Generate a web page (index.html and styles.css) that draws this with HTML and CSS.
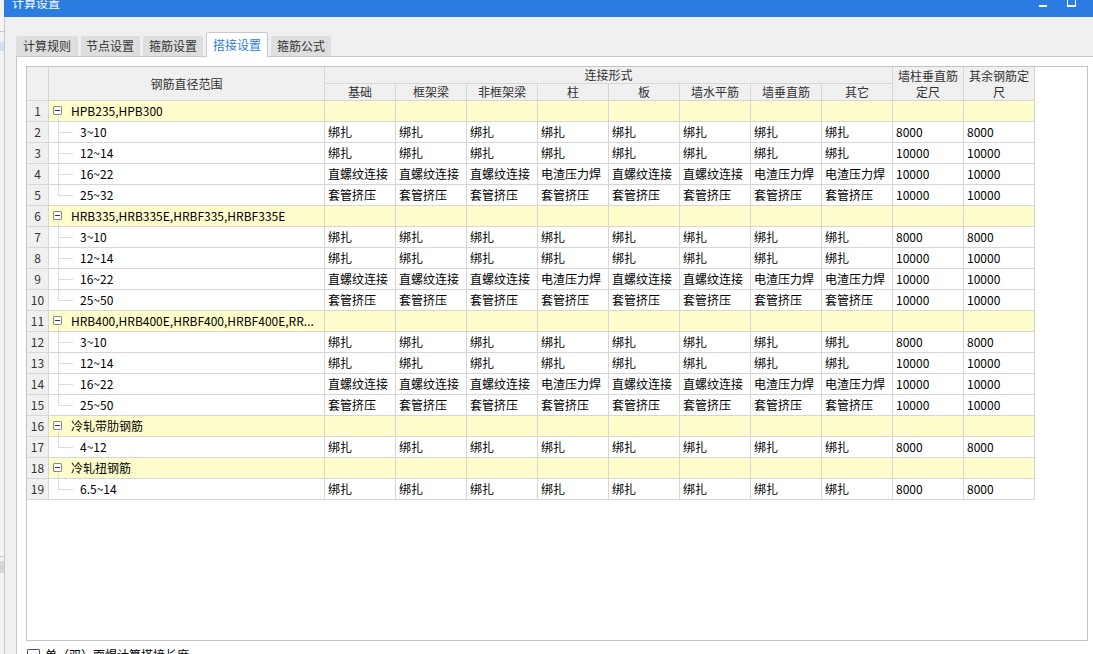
FILE: index.html
```html
<!DOCTYPE html>
<html lang="zh-CN">
<head>
<meta charset="utf-8">
<title>计算设置</title>
<link rel="stylesheet" href="styles.css">
</head>
<body>
<div class="screen">
  <div class="bgstrip"></div>
  <div class="dialog">
    <div class="titlebar">
      <span class="title">计算设置</span>
      <div class="winbtns">
        <svg class="btn-min" width="8" height="3" viewBox="0 0 8 3"><rect x="0" y="0" width="8" height="2" fill="#fff"/></svg>
        <svg class="btn-max" width="9" height="7" viewBox="0 0 9 7"><rect x="0.5" y="-2" width="8" height="8.5" fill="none" stroke="#fff" stroke-width="1"/><rect x="0" y="5" width="9" height="2" fill="#fff"/></svg>
      </div>
    </div>
    <div class="body">
      <div class="tabs">
        <div class="tab">计算规则</div>
        <div class="tab">节点设置</div>
        <div class="tab">箍筋设置</div>
        <div class="tab active">搭接设置</div>
        <div class="tab">箍筋公式</div>
      </div>
      <div class="panel">
        <div class="gridbox">
          <div class="grid">
            <div class="h rn hspan"></div>
            <div class="h range hspan">钢筋直径范围</div>
            <div class="h conn">连接形式</div>
            <div class="h last1 hspan">墙柱垂直筋定尺</div>
            <div class="h last2 hspan">其余钢筋定尺</div>
            <div class="h">基础</div>
            <div class="h">框架梁</div>
            <div class="h">非框架梁</div>
            <div class="h">柱</div>
            <div class="h">板</div>
            <div class="h">墙水平筋</div>
            <div class="h">墙垂直筋</div>
            <div class="h">其它</div>

            <!-- 1 -->
            <div class="c rn">1</div>
            <div class="c g name"><span class="minus"></span><span class="gt">HPB235,HPB300</span></div>
            <div class="c g"></div><div class="c g"></div><div class="c g"></div><div class="c g"></div><div class="c g"></div><div class="c g"></div><div class="c g"></div><div class="c g"></div><div class="c g"></div><div class="c g"></div>
            <!-- 2 -->
            <div class="c rn">2</div>
            <div class="c name"><span class="branch"></span><span>3~10</span></div>
            <div class="c">绑扎</div><div class="c">绑扎</div><div class="c">绑扎</div><div class="c">绑扎</div><div class="c">绑扎</div><div class="c">绑扎</div><div class="c">绑扎</div><div class="c">绑扎</div><div class="c">8000</div><div class="c">8000</div>
            <!-- 3 -->
            <div class="c rn">3</div>
            <div class="c name"><span class="branch"></span><span>12~14</span></div>
            <div class="c">绑扎</div><div class="c">绑扎</div><div class="c">绑扎</div><div class="c">绑扎</div><div class="c">绑扎</div><div class="c">绑扎</div><div class="c">绑扎</div><div class="c">绑扎</div><div class="c">10000</div><div class="c">10000</div>
            <!-- 4 -->
            <div class="c rn">4</div>
            <div class="c name"><span class="branch"></span><span>16~22</span></div>
            <div class="c">直螺纹连接</div><div class="c">直螺纹连接</div><div class="c">直螺纹连接</div><div class="c">电渣压力焊</div><div class="c">直螺纹连接</div><div class="c">直螺纹连接</div><div class="c">电渣压力焊</div><div class="c">电渣压力焊</div><div class="c">10000</div><div class="c">10000</div>
            <!-- 5 -->
            <div class="c rn">5</div>
            <div class="c name"><span class="branch end"></span><span>25~32</span></div>
            <div class="c">套管挤压</div><div class="c">套管挤压</div><div class="c">套管挤压</div><div class="c">套管挤压</div><div class="c">套管挤压</div><div class="c">套管挤压</div><div class="c">套管挤压</div><div class="c">套管挤压</div><div class="c">10000</div><div class="c">10000</div>

            <!-- 6 -->
            <div class="c rn">6</div>
            <div class="c g name"><span class="minus"></span><span class="gt">HRB335,HRB335E,HRBF335,HRBF335E</span></div>
            <div class="c g"></div><div class="c g"></div><div class="c g"></div><div class="c g"></div><div class="c g"></div><div class="c g"></div><div class="c g"></div><div class="c g"></div><div class="c g"></div><div class="c g"></div>
            <!-- 7 -->
            <div class="c rn">7</div>
            <div class="c name"><span class="branch"></span><span>3~10</span></div>
            <div class="c">绑扎</div><div class="c">绑扎</div><div class="c">绑扎</div><div class="c">绑扎</div><div class="c">绑扎</div><div class="c">绑扎</div><div class="c">绑扎</div><div class="c">绑扎</div><div class="c">8000</div><div class="c">8000</div>
            <!-- 8 -->
            <div class="c rn">8</div>
            <div class="c name"><span class="branch"></span><span>12~14</span></div>
            <div class="c">绑扎</div><div class="c">绑扎</div><div class="c">绑扎</div><div class="c">绑扎</div><div class="c">绑扎</div><div class="c">绑扎</div><div class="c">绑扎</div><div class="c">绑扎</div><div class="c">10000</div><div class="c">10000</div>
            <!-- 9 -->
            <div class="c rn">9</div>
            <div class="c name"><span class="branch"></span><span>16~22</span></div>
            <div class="c">直螺纹连接</div><div class="c">直螺纹连接</div><div class="c">直螺纹连接</div><div class="c">电渣压力焊</div><div class="c">直螺纹连接</div><div class="c">直螺纹连接</div><div class="c">电渣压力焊</div><div class="c">电渣压力焊</div><div class="c">10000</div><div class="c">10000</div>
            <!-- 10 -->
            <div class="c rn">10</div>
            <div class="c name"><span class="branch end"></span><span>25~50</span></div>
            <div class="c">套管挤压</div><div class="c">套管挤压</div><div class="c">套管挤压</div><div class="c">套管挤压</div><div class="c">套管挤压</div><div class="c">套管挤压</div><div class="c">套管挤压</div><div class="c">套管挤压</div><div class="c">10000</div><div class="c">10000</div>

            <!-- 11 -->
            <div class="c rn">11</div>
            <div class="c g name"><span class="minus"></span><span class="gt">HRB400,HRB400E,HRBF400,HRBF400E,RR...</span></div>
            <div class="c g"></div><div class="c g"></div><div class="c g"></div><div class="c g"></div><div class="c g"></div><div class="c g"></div><div class="c g"></div><div class="c g"></div><div class="c g"></div><div class="c g"></div>
            <!-- 12 -->
            <div class="c rn">12</div>
            <div class="c name"><span class="branch"></span><span>3~10</span></div>
            <div class="c">绑扎</div><div class="c">绑扎</div><div class="c">绑扎</div><div class="c">绑扎</div><div class="c">绑扎</div><div class="c">绑扎</div><div class="c">绑扎</div><div class="c">绑扎</div><div class="c">8000</div><div class="c">8000</div>
            <!-- 13 -->
            <div class="c rn">13</div>
            <div class="c name"><span class="branch"></span><span>12~14</span></div>
            <div class="c">绑扎</div><div class="c">绑扎</div><div class="c">绑扎</div><div class="c">绑扎</div><div class="c">绑扎</div><div class="c">绑扎</div><div class="c">绑扎</div><div class="c">绑扎</div><div class="c">10000</div><div class="c">10000</div>
            <!-- 14 -->
            <div class="c rn">14</div>
            <div class="c name"><span class="branch"></span><span>16~22</span></div>
            <div class="c">直螺纹连接</div><div class="c">直螺纹连接</div><div class="c">直螺纹连接</div><div class="c">电渣压力焊</div><div class="c">直螺纹连接</div><div class="c">直螺纹连接</div><div class="c">电渣压力焊</div><div class="c">电渣压力焊</div><div class="c">10000</div><div class="c">10000</div>
            <!-- 15 -->
            <div class="c rn">15</div>
            <div class="c name"><span class="branch end"></span><span>25~50</span></div>
            <div class="c">套管挤压</div><div class="c">套管挤压</div><div class="c">套管挤压</div><div class="c">套管挤压</div><div class="c">套管挤压</div><div class="c">套管挤压</div><div class="c">套管挤压</div><div class="c">套管挤压</div><div class="c">10000</div><div class="c">10000</div>

            <!-- 16 -->
            <div class="c rn">16</div>
            <div class="c g name"><span class="minus"></span><span class="gt">冷轧带肋钢筋</span></div>
            <div class="c g"></div><div class="c g"></div><div class="c g"></div><div class="c g"></div><div class="c g"></div><div class="c g"></div><div class="c g"></div><div class="c g"></div><div class="c g"></div><div class="c g"></div>
            <!-- 17 -->
            <div class="c rn">17</div>
            <div class="c name"><span class="branch end"></span><span>4~12</span></div>
            <div class="c">绑扎</div><div class="c">绑扎</div><div class="c">绑扎</div><div class="c">绑扎</div><div class="c">绑扎</div><div class="c">绑扎</div><div class="c">绑扎</div><div class="c">绑扎</div><div class="c">8000</div><div class="c">8000</div>

            <!-- 18 -->
            <div class="c rn">18</div>
            <div class="c g name"><span class="minus"></span><span class="gt">冷轧扭钢筋</span></div>
            <div class="c g"></div><div class="c g"></div><div class="c g"></div><div class="c g"></div><div class="c g"></div><div class="c g"></div><div class="c g"></div><div class="c g"></div><div class="c g"></div><div class="c g"></div>
            <!-- 19 -->
            <div class="c rn">19</div>
            <div class="c name"><span class="branch end"></span><span>6.5~14</span></div>
            <div class="c">绑扎</div><div class="c">绑扎</div><div class="c">绑扎</div><div class="c">绑扎</div><div class="c">绑扎</div><div class="c">绑扎</div><div class="c">绑扎</div><div class="c">绑扎</div><div class="c">8000</div><div class="c">8000</div>
          </div>
        </div>
        <label class="check"><span class="box"></span><span>单（双）面焊计算搭接长度</span></label>
      </div>
    </div>
  </div>
</div>
</body>
</html>
```

FILE: styles.css
```css
* { box-sizing: border-box; }
html, body {
  margin: 0;
  padding: 0;
  width: 1093px;
  height: 654px;
  overflow: hidden;
  background: #f0f0f0;
  font-family: "Noto Sans CJK SC", "Microsoft YaHei", sans-serif;
  font-size: 12px;
  color: #000;
}
.screen {
  display: flex;
  width: 1093px;
  height: 654px;
}
.bgstrip {
  width: 4px;
  flex: none;
  background:
    linear-gradient(#c8c8c8, #c8c8c8) 0 31px / 100% 1px no-repeat,
    linear-gradient(#cfe0f5, #cfe0f5) 0 42px / 100% 9px no-repeat,
    linear-gradient(#c8c8c8, #c8c8c8) 0 556px / 100% 1px no-repeat,
    linear-gradient(#d6d6d6, #d6d6d6) 0 561px / 100% 12px no-repeat,
    #f4f4f4;
}
.dialog {
  flex: 1;
  display: flex;
  flex-direction: column;
  min-width: 0;
  min-height: 0;
}
.titlebar {
  flex: none;
  height: 17px;
  background: #2b7de1;
  display: flex;
  align-items: flex-start;
  overflow: hidden;
}
.title {
  color: #fff;
  font-size: 12px;
  line-height: 17px;
  margin-left: 8px;
  margin-top: -6px;
}
.winbtns {
  margin-left: auto;
  display: flex;
  align-items: flex-start;
  margin-right: 17px;
}
.btn-min { margin-top: 5px; margin-right: 20px; display: block; }
.btn-max { margin-top: 0; display: block; }
.body {
  flex: 1;
  min-height: 0;
  border-left: 1px solid #c3cbd8;
  padding-left: 11px;
  display: flex;
  flex-direction: column;
}
.tabs {
  flex: none;
  display: flex;
  align-items: flex-end;
  gap: 3px;
  height: 39px;
  position: relative;
  z-index: 1;
}
.tab {
  flex: none;
  height: 20px;
  line-height: 20px;
  padding: 0 7px;
  background: #dedede;
  color: #333;
  border-radius: 2px 2px 0 0;
  font-size: 12px;
}
.tab:nth-child(2) { padding: 0 6px 0 5px; }
.tab:nth-child(3) { padding: 0 6px 0 6px; }
.tab.active {
  height: 25px;
  line-height: 24px;
  margin: 0 0 -1px 0;
  padding: 0 6px;
  background: #fff;
  color: #2b7de1;
  border: 1px solid #c8c8c8;
  border-bottom: none;
}
.tab:nth-child(5) { padding: 0 6px; }
.panel {
  flex: 1;
  min-height: 0;
  background: #fff;
  border-top: 1px solid #c8c8c8;
  border-left: 1px solid #c8c8c8;
  padding: 9px 0 0 9px;
}
.gridbox {
  width: 1062px;
  height: 575px;
  border: 1px solid #c4c4c4;
  background: #fff;
}
.grid {
  display: grid;
  grid-template-columns: 22px 276px repeat(10, 71px);
  grid-template-rows: 17px 17px repeat(19, 21px);
  width: 1008px;
}
.h, .c {
  border-right: 1px solid #d6d6d6;
  border-bottom: 1px solid #d6d6d6;
  white-space: nowrap;
  overflow: hidden;
}
.h {
  background: #f0f0f0;
  color: #333;
  display: flex;
  align-items: center;
  justify-content: center;
  text-align: center;
  line-height: 16px;
}
.h.hspan { grid-row: 1 / 3; }
.h.rn { grid-column: 1; }
.h.range { grid-column: 2; }
.h.conn { grid-row: 1; grid-column: 3 / 11; }
.h.last1 { grid-column: 11; white-space: normal; padding: 0 4px; }
.h.last2 { grid-column: 12; white-space: normal; padding: 0 4px; }
.c {
  line-height: 20px;
  padding: 0 3px;
}
.c.rn {
  background: #f0f0f0;
  color: #333;
  text-align: center;
  padding: 0;
}
.c.g { background: #fffdcc; }
.c.name {
  display: flex;
  align-items: stretch;
  padding: 0;
}
.c.g.name {
  padding-left: 4px;
  align-items: center;
  background:
    linear-gradient(#dcdcdc, #dcdcdc) 9px 15px / 1px 6px no-repeat,
    #fffdcc;
}
.minus {
  width: 9px;
  height: 9px;
  border: 1px solid #8a8a8a;
  border-radius: 1px;
  background: linear-gradient(#333, #333) center / 5px 1px no-repeat, #fff;
  flex: none;
  margin-top: -1px;
}
.gt { margin-left: 9px; }
.branch {
  width: 15px;
  margin-left: 9px;
  margin-right: 7px;
  flex: none;
  background:
    linear-gradient(#dcdcdc, #dcdcdc) 0 10px / 100% 1px no-repeat,
    linear-gradient(#dcdcdc, #dcdcdc) 0 0 / 1px 100% no-repeat;
}
.branch.end {
  background:
    linear-gradient(#dcdcdc, #dcdcdc) 0 10px / 100% 1px no-repeat,
    linear-gradient(#dcdcdc, #dcdcdc) 0 0 / 1px 10px no-repeat;
}
.check {
  flex: none;
  display: flex;
  align-items: center;
  margin-top: 7px;
  margin-left: 1px;
  gap: 5px;
  line-height: 14px;
}
.check .box {
  flex: none;
  width: 13px;
  height: 13px;
  border: 1px solid #555;
  border-radius: 1px;
  background: #fff;
}
```
